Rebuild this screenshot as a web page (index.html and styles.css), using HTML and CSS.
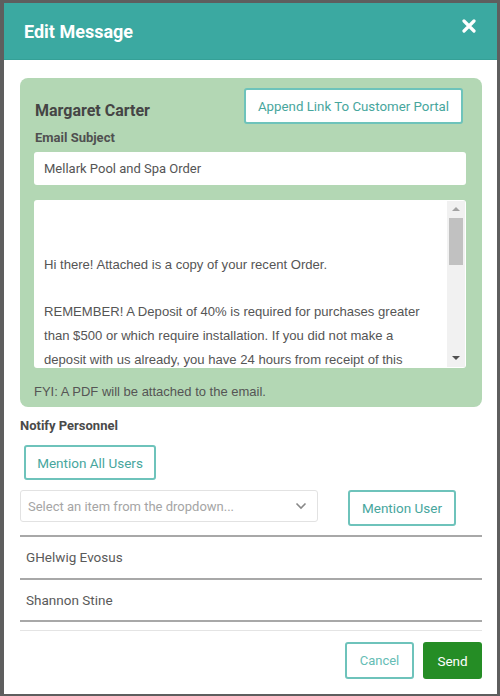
FILE: index.html
```html
<!DOCTYPE html>
<html>
<head>
<meta charset="utf-8">
<link rel="stylesheet" href="styles.css">
</head>
<body>
<div class="modal">
  <div class="modal-header">
    <h1 class="title">Edit Message</h1>
    <svg class="close" width="14" height="14" viewBox="0 0 14 14"><path d="M2 2 L12 12 M12 2 L2 12" stroke="#fff" stroke-width="3.2" stroke-linecap="round"/></svg>
  </div>
  <div class="modal-body">
    <div class="panel">
      <div class="panel-top">
        <div class="name">Margaret Carter</div>
        <button class="btn btn-outline btn-append">Append Link To Customer Portal</button>
      </div>
      <div class="label">Email Subject</div>
      <div class="input">Mellark Pool and Spa Order</div>
      <div class="textarea">
        <div class="ta-text">
          <div class="line">&nbsp;</div>
          <div class="line">&nbsp;</div>
          <div class="line">Hi there! Attached is a copy of your recent Order.</div>
          <div class="line">&nbsp;</div>
          <div class="line">REMEMBER! A Deposit of 40% is required for purchases greater</div>
          <div class="line">than $500 or which require installation. If you did not make a</div>
          <div class="line">deposit with us already, you have 24 hours from receipt of this</div>
        </div>
        <div class="scrollbar">
          <div class="arrow up"></div>
          <div class="thumb"></div>
          <div class="track"></div>
          <div class="arrow down"></div>
        </div>
      </div>
      <div class="fyi">FYI: A PDF will be attached to the email.</div>
    </div>
    <div class="notify-label">Notify Personnel</div>
    <button class="btn btn-outline btn-all">Mention All Users</button>
    <div class="select-row">
      <div class="select">
        <span>Select an item from the dropdown...</span>
        <svg width="12" height="8" viewBox="0 0 12 8"><path d="M1.5 1.5 L6 6 L10.5 1.5" fill="none" stroke="#888" stroke-width="1.6"/></svg>
      </div>
      <button class="btn btn-outline btn-user">Mention User</button>
    </div>
    <div class="list">
      <div class="item">GHelwig Evosus</div>
      <div class="item">Shannon Stine</div>
    </div>
    <div class="footer">
      <button class="btn btn-outline btn-cancel">Cancel</button>
      <button class="btn btn-send">Send</button>
    </div>
  </div>
</div>
</body>
</html>
```
FILE: styles.css
```css
* { box-sizing: border-box; }
html, body { margin: 0; }
body {
  width: 500px;
  height: 696px;
  background: #5e5e5e;
  padding: 3px 3px 0 4px;
  font-family: Roboto, "Liberation Sans", Arial, sans-serif;
  overflow: hidden;
}
.modal {
  width: 493px;
  height: 691px;
  background: #fff;
  display: flex;
  flex-direction: column;
}
.modal-header {
  height: 57px;
  background: #3ba9a1;
  display: flex;
  align-items: center;
  justify-content: space-between;
  padding: 0 21px 0 20px;
  border-bottom: 1px solid #35a097;
}
.title {
  margin: 0;
  color: #fff;
  font-size: 18px;
  font-weight: 700;
}
.close { margin-top: -10px; }
.modal-body {
  padding: 18px 15px 0 16px;
  display: flex;
  flex-direction: column;
}
.panel {
  background: #b3d7b4;
  border-radius: 8px;
  padding: 10px 16px 8px 14px;
  display: flex;
  flex-direction: column;
}
.panel-top {
  display: flex;
  justify-content: space-between;
  align-items: center;
  margin-right: 3px;
}
.name {
  font-size: 16px;
  font-weight: 700;
  color: #454545;
  margin-top: 8px;
  margin-left: 1px;
}
.btn {
  font-family: Roboto, "Liberation Sans", Arial, sans-serif;
  background: #fff;
  border-radius: 3px;
  cursor: pointer;
}
.btn-outline {
  border: 2px solid #6ec3bb;
  color: #47a69d;
  font-size: 13px;
}
.btn-append {
  height: 36px;
  width: 219px;
  padding: 0;
  font-size: 13.3px;
}
.label {
  font-size: 13px;
  font-weight: 700;
  color: #505050;
  margin-top: 6px;
  margin-left: 1px;
}
.input {
  margin-top: 7px;
  height: 33px;
  background: #fff;
  border-radius: 3px;
  font-size: 13px;
  color: #555;
  padding: 0 10px;
  display: flex;
  align-items: center;
}
.textarea {
  margin-top: 15px;
  height: 168px;
  background: #fff;
  border-radius: 3px;
  display: flex;
  overflow: hidden;
}
.ta-text {
  flex: 1;
  padding: 6px 10px 0 10px;
  font-family: "Liberation Sans", Arial, sans-serif;
  font-size: 13.1px;
  color: #555;
  overflow: hidden;
}
.line {
  height: 23.6px;
  line-height: 23.6px;
  white-space: nowrap;
}
.scrollbar {
  width: 18px;
  margin: 1px 1px 1px 0;
  background: #f1f1f1;
  display: flex;
  flex-direction: column;
  align-items: center;
}
.arrow {
  width: 0;
  height: 0;
  border-left: 4px solid transparent;
  border-right: 4px solid transparent;
  margin: 6px 0 5px;
}
.arrow.up { border-bottom: 4px solid #a3a3a3; }
.arrow.down { border-top: 4px solid #505050; margin: 5px 0 7px; }
.thumb {
  width: 14px;
  height: 47px;
  background: #c1c1c1;
  margin-top: 2px;
}
.track { flex: 1; }
.fyi {
  margin-top: 16px;
  font-family: "Liberation Sans", Arial, sans-serif;
  font-size: 13px;
  color: #555;
}
.notify-label {
  margin-top: 11px;
  font-size: 13px;
  font-weight: 700;
  color: #4a4a4a;
}
.btn-all {
  margin-top: 12px;
  margin-left: 4px;
  width: 132px;
  height: 35px;
  padding: 0;
  font-size: 13.5px;
}
.select-row {
  margin-top: 10px;
  display: flex;
  align-items: flex-start;
  gap: 30px;
}
.select {
  width: 298px;
  height: 32px;
  border: 1px solid #e2e2e2;
  border-radius: 3px;
  display: flex;
  align-items: center;
  justify-content: space-between;
  padding: 0 10px 0 7px;
  font-size: 13px;
  color: #a5a5a5;
}
.btn-user {
  width: 108px;
  height: 36px;
  padding: 0;
  font-size: 13.5px;
}
.list {
  margin-top: 9px;
  border-bottom: 2px solid #a8a8a8;
}
.item {
  height: 42.5px;
  border-top: 2px solid #a8a8a8;
  display: flex;
  align-items: center;
  padding-left: 6px;
  font-size: 13.5px;
  color: #5a5a5a;
}
.footer {
  margin-top: 8px;
  border-top: 1px solid #e4e4e4;
  padding-top: 11px;
  display: flex;
  justify-content: flex-end;
  gap: 9px;
}
.btn-cancel {
  width: 69px;
  height: 37px;
  padding: 0;
  font-size: 13px;
  color: #65bdb5;
}
.btn-send {
  width: 59px;
  height: 37px;
  padding: 0;
  border: none;
  background: #258d25;
  color: #fff;
  font-size: 13.5px;
}
```
